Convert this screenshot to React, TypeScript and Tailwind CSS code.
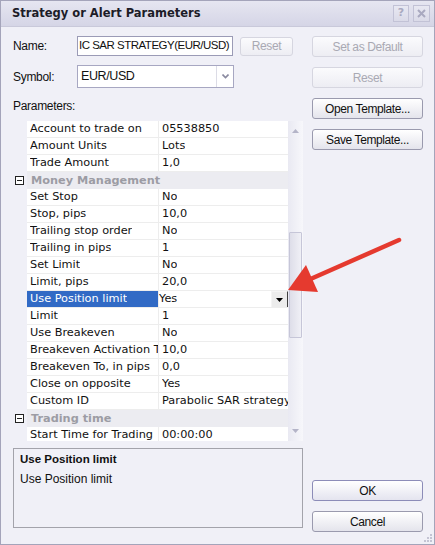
import React from "react";

const grid = "font-['DejaVu_Sans',sans-serif] text-[11.3px]";
const arial = "font-['Liberation_Sans',Arial,sans-serif]";

type Row =
  | { kind: "prop"; name: string; value: string; selected?: boolean }
  | { kind: "cat"; name: string };

const rows: Row[] = [
  { kind: "prop", name: "Account to trade on", value: "05538850" },
  { kind: "prop", name: "Amount Units", value: "Lots" },
  { kind: "prop", name: "Trade Amount", value: "1,0" },
  { kind: "cat", name: "Money Management" },
  { kind: "prop", name: "Set Stop", value: "No" },
  { kind: "prop", name: "Stop, pips", value: "10,0" },
  { kind: "prop", name: "Trailing stop order", value: "No" },
  { kind: "prop", name: "Trailing in pips", value: "1" },
  { kind: "prop", name: "Set Limit", value: "No" },
  { kind: "prop", name: "Limit, pips", value: "20,0" },
  { kind: "prop", name: "Use Position limit", value: "Yes", selected: true },
  { kind: "prop", name: "Limit", value: "1" },
  { kind: "prop", name: "Use Breakeven", value: "No" },
  { kind: "prop", name: "Breakeven Activation Threshold", value: "10,0" },
  { kind: "prop", name: "Breakeven To, in pips", value: "0,0" },
  { kind: "prop", name: "Close on opposite", value: "Yes" },
  { kind: "prop", name: "Custom ID", value: "Parabolic SAR strategy" },
  { kind: "cat", name: "Trading time" },
  { kind: "prop", name: "Start Time for Trading", value: "00:00:00" },
];

function Btn({
  label,
  disabled,
  primary,
  className = "",
}: {
  label: string;
  disabled?: boolean;
  primary?: boolean;
  className?: string;
}) {
  const base =
    "flex items-center justify-center rounded-[3px] border text-[12px] tracking-[-0.4px] " + arial;
  const look = disabled
    ? "border-[#d6d6e0] bg-gradient-to-b from-[#fbfbfd] to-[#ededf3] text-[#a9a9b3]"
    : primary
    ? "border-[#8c8cb8] bg-gradient-to-b from-[#ffffff] to-[#e4e4ef] text-[#111]"
    : "border-[#9a9aae] bg-gradient-to-b from-[#ffffff] to-[#e4e4ec] text-[#111]";
  return <div className={`${base} ${look} ${className}`}>{label}</div>;
}

function MinusBox() {
  return (
    <div className="flex h-[9px] w-[9px] items-center justify-center border border-[#222] bg-white">
      <div className="h-[1px] w-[5px] bg-[#222]" />
    </div>
  );
}

function PropRow({ row }: { row: Row }) {
  if (row.kind === "cat") {
    return (
      <div className="flex h-[17px]">
        <div className="flex w-[13px] shrink-0 items-center pl-[1px]">
          <MinusBox />
        </div>
        <div
          className={`flex flex-1 items-center bg-[#ececf1] pl-[4px] pt-[1px] font-bold text-[#9c9ca4] ${grid}`}
        >
          {row.name}
        </div>
      </div>
    );
  }
  return (
    <div className="flex h-[17px]">
      <div className="w-[13px] shrink-0" />
      <div
        className={`flex w-[131px] shrink-0 items-center overflow-hidden whitespace-nowrap border-b border-[#ededed] pl-[3px] pt-[1px] ${grid} ${
          row.selected ? "bg-[#316ac5] text-white" : "bg-white text-[#111]"
        }`}
      >
        <span className="overflow-hidden">{row.name}</span>
      </div>
      <div className="w-[1px] shrink-0 bg-[#ededed]" />
      <div
        className={`relative flex flex-1 items-center overflow-hidden whitespace-nowrap border-b border-[#ededed] bg-white pt-[1px] ${grid} text-[#111] ${
          row.selected ? "pl-0" : "pl-[3px]"
        }`}
      >
        <span className="overflow-hidden">{row.value}</span>
        {row.selected && (
          <div className="absolute right-0 top-0 flex h-[17px] w-[17px] items-center justify-center border border-t-[#f4f4f4] border-l-[#f4f4f4] border-b-[#404040] border-r-[#404040] bg-[#ececec]">
            <svg width="7" height="4" viewBox="0 0 7 4">
              <path d="M0 0h7L3.5 4z" fill="#000" />
            </svg>
          </div>
        )}
      </div>
    </div>
  );
}

export default function App() {
  return (
    <div className="relative flex h-[545px] w-[435px] flex-col overflow-hidden border border-[#a4a4ba] bg-[#f0f0f7]">
      {/* title bar */}
      <div className="flex h-[26px] shrink-0 items-center border-b border-[#c9c9da] bg-gradient-to-b from-[#e6e6f1] to-[#d5d5e6] pl-[11px] pr-[4px]">
        <div className="flex-1 font-['DejaVu_Sans',sans-serif] text-[11.5px] font-bold text-[#1c1c28]">
          Strategy or Alert Parameters
        </div>
        <div className="flex gap-[4px]">
          <div className="flex h-[17px] w-[16px] items-center justify-center border border-[#c2c2d6] bg-gradient-to-b from-[#e8e8f2] to-[#dadae8] font-['DejaVu_Sans',sans-serif] text-[11px] font-bold text-[#a9a9c0]">
            ?
          </div>
          <div className="flex h-[17px] w-[17px] items-center justify-center border border-[#c2c2d6] bg-gradient-to-b from-[#e8e8f2] to-[#dadae8]">
            <svg width="9" height="9" viewBox="0 0 9 9">
              <path d="M1 1l7 7M8 1L1 8" stroke="#a9a9c0" strokeWidth="2" />
            </svg>
          </div>
        </div>
      </div>

      {/* body */}
      <div className="flex flex-1 pl-[12px]">
        {/* left column */}
        <div className="flex w-[290px] flex-col pt-[9px]">
          <div className={`flex h-[20px] items-center ${arial} text-[12px] tracking-[-0.3px] text-[#111]`}>
            <div className="w-[64px]">Name:</div>
            <div className="flex h-[20px] w-[156px] items-center whitespace-nowrap border border-[#9b9bb6] bg-white pl-[1px] text-[11.5px] tracking-[-0.5px]">
              IC SAR STRATEGY(EUR/USD)
            </div>
            <Btn label="Reset" disabled className="ml-[7px] h-[19px] w-[53px]" />
          </div>
          <div className={`mt-[9px] flex h-[23px] items-center ${arial} text-[12px] tracking-[-0.3px] text-[#111]`}>
            <div className="w-[64px]">Symbol:</div>
            <div className="flex h-[23px] w-[157px] items-center border border-[#a7a7c2] bg-white">
              <div className="flex-1 pl-[3px] text-[12.5px] tracking-[-0.4px]">EUR/USD</div>
              <div className="flex h-full w-[17px] items-center justify-center border-l border-[#dcdce6]">
                <svg width="7" height="5" viewBox="0 0 7 5">
                  <path d="M0.5 0.5l3 3 3-3" stroke="#8a8aa0" strokeWidth="1.6" fill="none" />
                </svg>
              </div>
            </div>
          </div>
          <div className={`h-[33px] pt-[9px] ${arial} text-[12px] tracking-[-0.3px] text-[#111]`}>
            Parameters:
          </div>

          {/* property grid */}
          <div className="ml-[1px] flex h-[320px] w-[289px] overflow-hidden">
            <div className="w-[274px] shrink-0">
              {rows.map((r, i) => (
                <PropRow key={i} row={r} />
              ))}
            </div>
            <div className="relative w-[15px] shrink-0 bg-gradient-to-r from-[#e9e9f2] to-[#f7f7fb]">
              <div className="flex h-[17px] items-center justify-center">
                <svg width="7" height="4" viewBox="0 0 7 4" className="mt-[2px]">
                  <path d="M0 4h7L3.5 0z" fill="#b4b4c8" />
                </svg>
              </div>
              <div className="absolute left-[1px] top-[111px] h-[106px] w-[13px] rounded-[1px] border border-[#c6c6d8] bg-gradient-to-r from-[#dedee9] to-[#f0f0f6]" />
              <div className="absolute bottom-[8px] left-0 flex w-[15px] justify-center">
                <svg width="7" height="4" viewBox="0 0 7 4">
                  <path d="M0 0h7L3.5 4z" fill="#b4b4c8" />
                </svg>
              </div>
            </div>
          </div>

          {/* description */}
          <div className="mt-[7px] h-[80px] w-[290px] border border-[#a3a3ab] px-[6px] pt-[2px]">
            <div className={`${arial} text-[11.5px] font-bold text-[#111]`}>Use Position limit</div>
            <div className={`mt-[2px] ${arial} text-[12px] text-[#111]`}>Use Position limit</div>
          </div>
        </div>

        {/* right column */}
        <div className="ml-[9px] flex w-[111px] flex-col pb-[12px] pt-[9px]">
          <div className="flex flex-col gap-[10px]">
            <Btn label="Set as Default" disabled className="h-[21px]" />
            <Btn label="Reset" disabled className="h-[21px]" />
            <Btn label="Open Template..." className="h-[21px]" />
            <Btn label="Save Template..." className="h-[21px]" />
          </div>
          <div className="flex-1" />
          <div className="flex flex-col gap-[10px]">
            <Btn label="OK" primary className="h-[21px]" />
            <Btn label="Cancel" className="h-[21px]" />
          </div>
        </div>
      </div>

      {/* resize grip */}
      <svg className="absolute bottom-[2px] right-[2px]" width="8" height="8" viewBox="0 0 8 8">
        {[
          [6, 0],
          [6, 3],
          [3, 3],
          [6, 6],
          [3, 6],
          [0, 6],
        ].map(([x, y], i) => (
          <rect key={i} x={x} y={y} width="2" height="2" fill="#c4c4d4" />
        ))}
      </svg>

      {/* red annotation arrow */}
      <svg className="pointer-events-none absolute left-0 top-0" width="435" height="545" viewBox="0 0 435 545">
        <path d="M398 239 L305 280" stroke="#e53a2f" strokeWidth="4.5" strokeLinecap="round" />
        <path d="M287 289 L305 264 L317 291 Z" fill="#e53a2f" />
      </svg>
    </div>
  );
}
